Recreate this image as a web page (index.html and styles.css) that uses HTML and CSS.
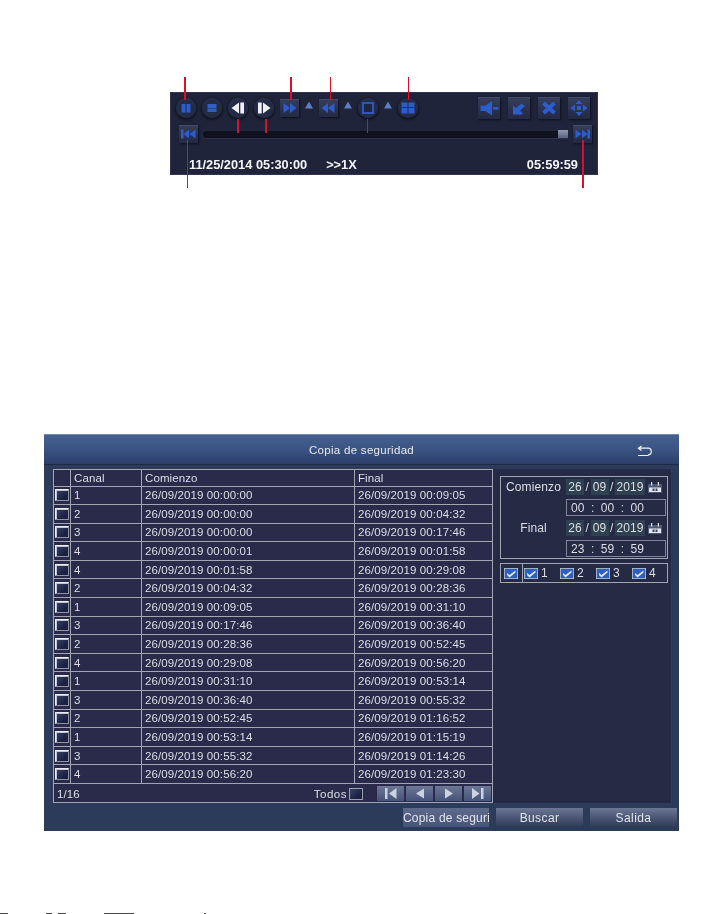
FILE: index.html
```html
<!DOCTYPE html>
<html lang="es">
<head>
<meta charset="utf-8">
<title>Copia de seguridad</title>
<link rel="stylesheet" href="styles.css">
</head>
<body>
<div class="page">
  <section class="player">
    <div class="player-soft">
      <div class="pl-row pl-top">
        <span class="rnd"><svg viewBox="0 0 20 20"><path class="b" d="M5.500 6h4v8.500h-4zM10.500 6h4v8.500h-4z"/></svg></span>
        <span class="rnd"><svg viewBox="0 0 20 20"><path class="b" d="M5.500 6h9v4h-9zM5.500 10.500h9V14h-9z"/></svg></span>
        <span class="rnd"><svg viewBox="0 0 20 20"><path class="w" d="M11 4.500v11L3.500 10zM12.300 4.500H16v11h-3.700z"/></svg></span>
        <span class="rnd"><svg viewBox="0 0 20 20"><path class="w" d="M4 4.500h3.700v11H4zM9 4.500l7.500 5.500L9 15.500z"/></svg></span>
        <span class="sq"><svg viewBox="0 0 19 18"><path class="b" d="M3.500 4 10 9l-6.500 5zM10 4l6.500 5-6.500 5z"/></svg></span>
        <span class="tri"></span>
        <span class="sq"><svg viewBox="0 0 19 18"><path class="b" d="M9 4 2.500 9 9 14zM15.500 4 9 9l6.500 5z"/></svg></span>
        <span class="tri"></span>
        <span class="rnd"><svg viewBox="0 0 20 20"><rect class="o" x="5" y="5" width="10" height="10"/></svg></span>
        <span class="tri"></span>
        <span class="rnd"><svg viewBox="0 0 20 20"><path class="b" d="M3.500 4.500h6V9h-6zM10.500 4.500h6V9h-6zM3.500 9.800h6v5.700h-6zM10.500 9.800h6v5.700h-6z"/></svg></span>
        <div class="pl-right">
          <span class="sq sq-big"><svg viewBox="0 0 22 22"><path class="b" d="M2.500 8.500h5L14 4v14.500l-6.500-4.500h-5zM15 10h5.500v2.500H15z"/></svg></span>
          <span class="sq sq-big"><svg viewBox="0 0 22 22"><path class="b" d="M5 8.500l3 2.500 5.500-4.500L17 9l-5 4.500 2.500 2.500v1.500H5z"/></svg></span>
          <span class="sq sq-big"><svg viewBox="0 0 22 22"><path class="x" d="M5.500 6 16.500 16M16.500 6 5.500 16"/></svg></span>
          <span class="sq sq-big"><svg viewBox="0 0 22 22"><path class="b" d="M11 3l3.500 4h-7zM11 19l-3.500-4h7zM2.500 11 7 7.500v7zM19.500 11 15 14.500v-7zM9 9h4v4H9z"/></svg></span>
        </div>
      </div>
      <div class="pl-row pl-mid">
        <span class="sq"><svg viewBox="0 0 19 18"><path class="b" d="M2 4.500h2.500v9H2zM10 4.500 4.500 9l5.500 4.500zM16.500 4.500 10.500 9l6 4.500z"/></svg></span>
        <div class="track"><span class="thumb"></span></div>
        <span class="sq"><svg viewBox="0 0 19 18"><path class="b" d="M2.500 4.500l6 4.500-6 4.500zM9 4.500l5.500 4.500L9 13.500zM14.500 4.500H17v9h-2.500z"/></svg></span>
      </div>
      <div class="pl-row pl-info">
        <span class="pl-date">11/25/2014 05:30:00</span>
        <span class="pl-speed">&gt;&gt;1X</span>
        <span class="pl-end">05:59:59</span>
      </div>
    </div>
    <i class="pin pin-a"></i><i class="pin pin-b"></i><i class="pin pin-c"></i><i class="pin pin-d"></i>
    <i class="pin pin-e"></i><i class="pin pin-f"></i><i class="pin pin-g"></i><i class="pin pin-h"></i><i class="pin pin-i"></i>
  </section>

  <section class="backup">
    <header class="titlebar">
      <h1>Copia de seguridad</h1>
      <svg class="back" viewBox="0 0 16 12"><path d="M4.500 1 1.500 3.200l3 2.200M1.500 3.200H11a3.300 3.300 0 0 1 0 6.600M1 10.500h10.500"/></svg>
    </header>
    <div class="content">
      <div class="list">
        <div class="row head"><span></span><span>Canal</span><span>Comienzo</span><span>Final</span></div>
        <div class="row"><span><b class="cb"></b></span><span>1</span><span>26/09/2019 00:00:00</span><span>26/09/2019 00:09:05</span></div>
        <div class="row"><span><b class="cb"></b></span><span>2</span><span>26/09/2019 00:00:00</span><span>26/09/2019 00:04:32</span></div>
        <div class="row"><span><b class="cb"></b></span><span>3</span><span>26/09/2019 00:00:00</span><span>26/09/2019 00:17:46</span></div>
        <div class="row"><span><b class="cb"></b></span><span>4</span><span>26/09/2019 00:00:01</span><span>26/09/2019 00:01:58</span></div>
        <div class="row"><span><b class="cb"></b></span><span>4</span><span>26/09/2019 00:01:58</span><span>26/09/2019 00:29:08</span></div>
        <div class="row"><span><b class="cb"></b></span><span>2</span><span>26/09/2019 00:04:32</span><span>26/09/2019 00:28:36</span></div>
        <div class="row"><span><b class="cb"></b></span><span>1</span><span>26/09/2019 00:09:05</span><span>26/09/2019 00:31:10</span></div>
        <div class="row"><span><b class="cb"></b></span><span>3</span><span>26/09/2019 00:17:46</span><span>26/09/2019 00:36:40</span></div>
        <div class="row"><span><b class="cb"></b></span><span>2</span><span>26/09/2019 00:28:36</span><span>26/09/2019 00:52:45</span></div>
        <div class="row"><span><b class="cb"></b></span><span>4</span><span>26/09/2019 00:29:08</span><span>26/09/2019 00:56:20</span></div>
        <div class="row"><span><b class="cb"></b></span><span>1</span><span>26/09/2019 00:31:10</span><span>26/09/2019 00:53:14</span></div>
        <div class="row"><span><b class="cb"></b></span><span>3</span><span>26/09/2019 00:36:40</span><span>26/09/2019 00:55:32</span></div>
        <div class="row"><span><b class="cb"></b></span><span>2</span><span>26/09/2019 00:52:45</span><span>26/09/2019 01:16:52</span></div>
        <div class="row"><span><b class="cb"></b></span><span>1</span><span>26/09/2019 00:53:14</span><span>26/09/2019 01:15:19</span></div>
        <div class="row"><span><b class="cb"></b></span><span>3</span><span>26/09/2019 00:55:32</span><span>26/09/2019 01:14:26</span></div>
        <div class="row"><span><b class="cb"></b></span><span>4</span><span>26/09/2019 00:56:20</span><span>26/09/2019 01:23:30</span></div>
        <div class="list-foot">
          <span class="count">1/16</span>
          <span class="all">Todos</span>
          <b class="cb cb-all"></b>
          <div class="pager">
            <span class="pg"><svg viewBox="0 0 27 15"><path d="M8 2h2.500v11H8zM19.500 2v11L12 7.500z"/></svg></span>
            <span class="pg"><svg viewBox="0 0 27 15"><path d="M18 2.500v10l-8-5z"/></svg></span>
            <span class="pg"><svg viewBox="0 0 27 15"><path d="M10 2.500v10l8-5z"/></svg></span>
            <span class="pg"><svg viewBox="0 0 27 15"><path d="M8 2v11l7.500-5.500zM17 2h2.500v11H17z"/></svg></span>
          </div>
        </div>
      </div>
      <aside class="side">
        <div class="range">
          <span class="lbl">Comienzo</span>
          <div class="datefield"><span class="seg">26</span><i>/</i><span class="seg">09</span><i>/</i><span class="seg seg-y">2019</span>
            <svg class="cal" viewBox="0 0 14 11"><path class="cal-f" d="M0 2h14v9H0z"/><path class="cal-d" d="M1 5.500h12V10H1z"/><path class="cal-t" d="M3 0h1.200v3.500H3zM9.800 0H11v3.500H9.800z"/><path class="cal-n" d="M4.500 6.500h2V9h-2zM7.500 6.500h2V9h-2z"/></svg>
          </div>
          <div class="timefield"><span>00</span><span>:</span><span>00</span><span>:</span><span>00</span></div>
          <span class="lbl">Final</span>
          <div class="datefield"><span class="seg">26</span><i>/</i><span class="seg">09</span><i>/</i><span class="seg seg-y">2019</span>
            <svg class="cal" viewBox="0 0 14 11"><path class="cal-f" d="M0 2h14v9H0z"/><path class="cal-d" d="M1 5.500h12V10H1z"/><path class="cal-t" d="M3 0h1.200v3.500H3zM9.800 0H11v3.500H9.800z"/><path class="cal-n" d="M4.500 6.500h2V9h-2zM7.500 6.500h2V9h-2z"/></svg>
          </div>
          <div class="timefield"><span>23</span><span>:</span><span>59</span><span>:</span><span>59</span></div>
        </div>
        <div class="channels">
          <div class="ch-all"><svg class="chk" viewBox="0 0 14 11"><rect class="chk-b" width="14" height="11"/><path class="chk-m" d="M3 5 5.500 7 11.500 2.500 11.500 4.500 5.500 9.500 3 7z"/></svg></div>
          <div class="ch-list">
            <span class="ch"><svg class="chk" viewBox="0 0 14 11"><rect class="chk-b" width="14" height="11"/><path class="chk-m" d="M3 5 5.500 7 11.500 2.500 11.500 4.500 5.500 9.500 3 7z"/></svg>1</span>
            <span class="ch"><svg class="chk" viewBox="0 0 14 11"><rect class="chk-b" width="14" height="11"/><path class="chk-m" d="M3 5 5.500 7 11.500 2.500 11.500 4.500 5.500 9.500 3 7z"/></svg>2</span>
            <span class="ch"><svg class="chk" viewBox="0 0 14 11"><rect class="chk-b" width="14" height="11"/><path class="chk-m" d="M3 5 5.500 7 11.500 2.500 11.500 4.500 5.500 9.500 3 7z"/></svg>3</span>
            <span class="ch"><svg class="chk" viewBox="0 0 14 11"><rect class="chk-b" width="14" height="11"/><path class="chk-m" d="M3 5 5.500 7 11.500 2.500 11.500 4.500 5.500 9.500 3 7z"/></svg>4</span>
          </div>
        </div>
      </aside>
    </div>
    <footer class="actions">
      <button class="btn btn-copy">Copia de seguri</button>
      <button class="btn">Buscar</button>
      <button class="btn">Salida</button>
    </footer>
  </section>
  <div class="sliver"><i class="s1"></i><i class="s2"></i><i class="s3"></i><i class="s4"></i><i class="s5"></i></div>
</div>
</body>
</html>
```
FILE: styles.css
```css
* { box-sizing: border-box; }
html, body { margin: 0; padding: 0; background: #fff; }
body { width: 725px; height: 914px; overflow: hidden; font-family: "Liberation Sans", Arial, sans-serif; }
.page { display: flex; flex-direction: column; align-items: flex-start; }

/* player */
.player { position: relative; width: 428px; height: 83px; margin: 92px 0 0 170px; background: #1f243a; box-shadow: inset 0 0 0 1px #2f354e; }
.player-soft { height: 100%; filter: blur(.6px); }
.pl-row { display: flex; align-items: center; }
.pl-top { height: 31px; padding: 1px 8px 0 6px; gap: 6px; }
.pl-mid { height: 18px; margin-top: 2px; padding: 0 6px 0 9px; gap: 5px; }
.pl-info { height: 22px; margin-top: 10px; padding: 0 20px 0 19px; color: #f4f5f8; font-weight: 700; font-size: 12.800px; }
.pl-speed { margin-left: 19px; }
.pl-end { margin-left: auto; }
.pl-right { display: flex; gap: 8px; margin-left: auto; }
.rnd { flex: none; width: 20px; height: 20px; border-radius: 50%; background: radial-gradient(circle at 50% 55%, #242b47 0, #242b47 60%, #333c5a 85%, #3c4666 100%); box-shadow: 0 1px 2px 1px #12151f; }
.rnd svg, .sq svg { display: block; width: 100%; height: 100%; }
.sq { flex: none; width: 19px; height: 18px; background: linear-gradient(#363e5b, #232941); box-shadow: 1px 1px 2px #0e111c, inset 0 1px 0 #424b6b; }
.sq-big { width: 22px; height: 22px; }
.tri { flex: none; width: 8px; height: 7px; margin-bottom: 6px; background: #5d80c4; clip-path: polygon(50% 0, 100% 100%, 0 100%); }
.b { fill: #2d5ccc; }
.w { fill: #eef0f4; }
.x { fill: none; stroke: #2d5ccc; stroke-width: 4; }
.o { fill: #1e2540; stroke: #2d5ccc; stroke-width: 1.800; }
.track { position: relative; flex: 1; height: 7px; border-radius: 4px 0 0 4px; background: #0f121e; box-shadow: 0 1px 0 #2a3048; }
.thumb { position: absolute; right: 0; top: -1px; width: 10px; height: 8px; background: linear-gradient(#8e98af, #5a637e); }

.pin { position: absolute; width: 1px; background: #d8102a; }
.pin-a { left: 14px; top: -15px; height: 23px; width: 2px; }
.pin-b { left: 120px; top: -15px; height: 23px; width: 2px; }
.pin-c { left: 160px; top: -15px; height: 23px; }
.pin-d { left: 238px; top: -15px; height: 23px; }
.pin-e { left: 67px; top: 27px; height: 14px; width: 2px; }
.pin-f { left: 95px; top: 27px; height: 14px; width: 2px; }
.pin-g { left: 197px; top: 27px; height: 14px; }
.pin-h { left: 17px; top: 48px; height: 48px; }
.pin-i { left: 412px; top: 48px; height: 48px; width: 2px; }

/* backup dialog */
.backup { width: 635px; height: 397px; margin: 259px 0 0 44px; background: #2d3b5b; color: #dcdfe4; font-size: 11.500px; letter-spacing: .1px; filter: blur(.4px); }
.titlebar { position: relative; display: flex; align-items: center; justify-content: center; height: 31px; background: linear-gradient(#45608f 0, #3b5585 45%, #2b4069 100%); border-top: 1px solid #7287ad; border-bottom: 1px solid #1c2a48; }
.titlebar h1 { margin: 0; font-size: 11.500px; font-weight: 400; letter-spacing: .3px; color: #e8eaee; }
.back { position: absolute; right: 26px; top: 10px; width: 16px; height: 12px; fill: none; stroke: #f2f3f6; stroke-width: 1.200; }

.content { display: flex; height: 338px; padding: 4px 8px 0 9px; }
.list { flex: none; width: 440px; height: 334px; border: 1px solid #a2a5b2; background: #2a2b4b; }
.row { display: grid; grid-template-columns: 17px 71px 213px 1fr; height: 18.600px; border-bottom: 1px solid #a2a5b2; align-items: stretch; }
.row.head { height: 16.500px; }
.row > span { display: flex; align-items: center; padding-left: 3px; border-right: 1px solid #a2a5b2; white-space: nowrap; }
.row > span:first-child { padding-left: 1px; }
.row > span:last-child { border-right: 0; }
.cb { display: block; flex: none; width: 14px; height: 12px; background: linear-gradient(135deg, #36446a, #1b2140 70%); border: 1px solid; border-color: #eceef2 #8e93a5 #8e93a5 #eceef2; box-shadow: inset 1px 1px 0 #c0c4d0; }
.list-foot { display: flex; align-items: center; height: 19px; padding-left: 3px; }
.all { margin-left: auto; letter-spacing: .5px; }
.cb-all { margin: 0 0 0 2px; border-color: #9a9fb0; box-shadow: none; }
.pager { display: flex; gap: 2px; margin-left: 14px; padding-right: 1px; }
.pg { display: block; width: 27px; height: 15px; background: linear-gradient(#6c7895, #46537a); }
.pg svg { display: block; width: 100%; height: 100%; fill: #ccd3e0; }

.side { flex: 1; display: flex; flex-direction: column; gap: 4px; height: 334px; padding: 7px 3px 0 7px; background: #252a45; }
.range { display: grid; grid-template-columns: 65px 100px; grid-template-rows: 16px 17px 16px 17px; row-gap: 4px; align-items: center; height: 83px; padding-top: 2px; border: 1px solid #a2a5b2; font-size: 12px; }
.lbl { text-align: center; }
.timefield { grid-column: 2; }
.datefield { display: flex; align-items: center; height: 16px; }
.datefield i { flex: none; width: 6.500px; font-style: normal; text-align: center; }
.seg { flex: none; width: 18px; height: 16px; line-height: 16px; text-align: center; background: #2f4150; }
.seg-y { width: 30px; }
.cal { flex: none; width: 14px; height: 11px; margin-left: 3px; }
.cal-f { fill: #4e5a78; }
.cal-d { fill: #e4e7ec; }
.cal-t { fill: #e4e7ec; }
.cal-n { fill: #3a4360; }
.timefield { display: flex; justify-content: space-between; align-items: center; height: 17px; padding: 0 21px 0 4px; border: 1px solid #7f8598; }
.channels { display: flex; height: 20px; border: 1px solid #a2a5b2; font-size: 12px; }
.ch-all { display: flex; align-items: center; width: 22px; padding-left: 3px; border-right: 1px solid #a2a5b2; }
.ch-list { display: flex; align-items: center; gap: 14px; padding-left: 1px; }
.ch { display: flex; align-items: center; gap: 3px; width: 22px; white-space: nowrap; }
.chk { display: block; flex: none; width: 14px; height: 11px; }
.chk-b { fill: #2f5fbc; stroke: #c3c9d6; stroke-width: 1.500; }
.chk-m { fill: #dfe6f2; }

.actions { display: flex; justify-content: flex-end; gap: 7px; padding: 5px 2px 0 0; }
.btn { width: 87px; height: 19px; padding: 0; border: 0; font: 400 12px "Liberation Sans", Arial, sans-serif; letter-spacing: .4px; color: #e2e5ea; background: linear-gradient(#6b7793 0, #4b5775 50%, #2f3a57 100%); }
.btn-copy { width: 86px; letter-spacing: .2px; white-space: nowrap; overflow: hidden; background: linear-gradient(#5d6a8a, #47547a); }

/* edge of next-page printing cut off by the window's bottom */
.sliver { display: flex; height: 1px; margin-top: 82px; }
.sliver i { display: block; height: 1px; background: #4a4a4a; }
.s1 { width: 8px; }
.s2 { width: 6px; margin-left: 38px; }
.s3 { width: 8px; margin-left: 6px; }
.s4 { width: 30px; margin-left: 38px; }
.s5 { width: 2px; margin-left: 70px; }
```
